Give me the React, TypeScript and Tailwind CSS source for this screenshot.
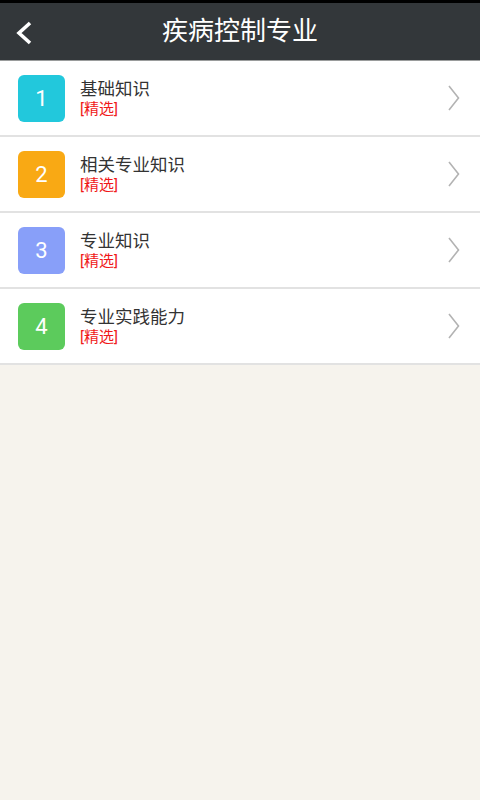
const ITEMS = [
  { no: 1, title: "基础知识", color: "bg-[#22c8dc]" },
  { no: 2, title: "相关专业知识", color: "bg-[#f9a914]" },
  { no: 3, title: "专业知识", color: "bg-[#889ff9]" },
  { no: 4, title: "专业实践能力", color: "bg-[#5ccb5c]" },
];

const FONT = {
  fontFamily: '"Roboto", "Noto Sans CJK SC", sans-serif',
};

export default function App() {
  return (
    <div className="flex h-[800px] w-[480px] flex-col bg-[#f6f3ed]" style={FONT}>
      <div className="h-[3px] bg-black" />
      <header className="relative flex h-[58px] items-center justify-center border-b border-[#9a9c9c] bg-[#33373a]">
        <svg
          className="absolute left-[14px] top-[17px]"
          width="20"
          height="26"
          viewBox="0 0 20 26"
          fill="none"
        >
          <path d="M16 3 L5 13 L16 23" stroke="white" strokeWidth="3.6" />
        </svg>
        <h1 className="text-[26px] text-white">疾病控制专业</h1>
      </header>

      <ul>
        {ITEMS.map((item) => (
          <li
            key={item.no}
            className="flex h-[76px] items-center border-b-2 border-[#e2e2e2] bg-white pl-[18px] pr-[19px]"
          >
            <div
              className={`flex h-[47px] w-[47px] items-center justify-center rounded-[6px] text-[22px] text-white ${item.color}`}
            >
              {item.no}
            </div>
            <div className="ml-[15px] flex flex-1 flex-col">
              <span className="text-[17.5px] leading-[22px] text-[#333]">{item.title}</span>
              <span className="text-[15px] leading-[18px] text-[#f01818]">[精选]</span>
            </div>
            <svg width="14" height="26" viewBox="0 0 14 26" fill="none">
              <path d="M2 1 L11.5 13 L2 25" stroke="#b3b3b3" strokeWidth="1.6" />
            </svg>
          </li>
        ))}
      </ul>
    </div>
  );
}
